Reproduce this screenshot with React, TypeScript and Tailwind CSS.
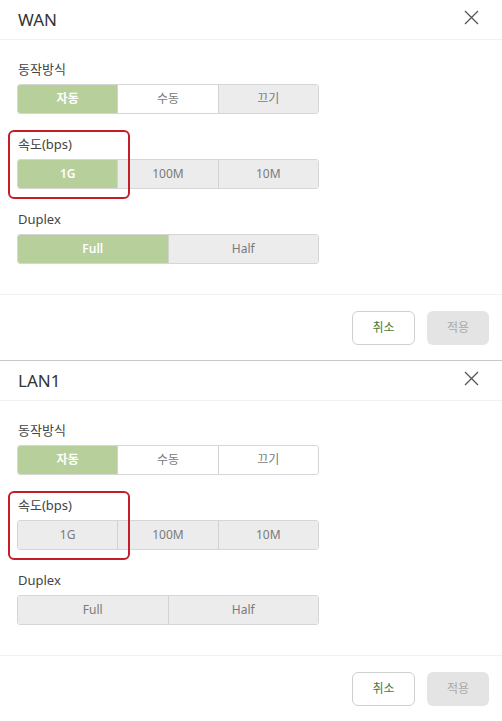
import React from "react";

type Seg = { label: string; state: "on" | "white" | "gray" };

function Group({ segs }: { segs: Seg[] }) {
  return (
    <div className="flex w-[302px] h-[30px] rounded-[3px] border border-[#d6d6d6] overflow-hidden">
      {segs.map((s, i) => (
        <div
          key={i}
          className={
            "flex-1 flex items-center justify-center text-[12px] " +
            (i > 0 ? "border-l border-[#d2d2d2] " : "") +
            (s.state === "on"
              ? "bg-[#b7cf9b] text-white font-semibold"
              : s.state === "white"
              ? "bg-white text-[#7a7a7a]"
              : "bg-[#ececec] text-[#7a7a7a]")
          }
        >
          {s.label}
        </div>
      ))}
    </div>
  );
}

function Label({ children }: { children: React.ReactNode }) {
  return <div className="h-[20px] leading-[20px] text-[13px] text-[#444] pl-px mb-[5px]">{children}</div>;
}

function Panel({
  title,
  mode,
  speed,
  duplex,
}: {
  title: string;
  mode: Seg[];
  speed: Seg[];
  duplex: Seg[];
}) {
  return (
    <div className="h-[361px] flex flex-col bg-white border-b border-[#c9c9c9]">
      <div className="h-[40px] flex items-center justify-between pl-[18px] pr-[23px] border-b border-[#f1f1f1] shrink-0">
        <span className="text-[17px] text-[#333]">{title}</span>
        <svg width="15" height="15" viewBox="0 0 15 15" className="mt-[-4px]">
          <path d="M1 1 L14 14 M14 1 L1 14" stroke="#555" strokeWidth="1.3" fill="none" />
        </svg>
      </div>
      <div className="pt-[19px] pl-[17px] pb-[30px] border-b border-[#f1f1f1]">
        <Label>동작방식</Label>
        <Group segs={mode} />
        <div className="relative mt-[20px]">
          <div className="absolute top-[-4px] left-[-9px] w-[122px] h-[69px] border-2 border-[#c41e2a] rounded-[6px] pointer-events-none" />
          <Label>속도(bps)</Label>
          <Group segs={speed} />
        </div>
        <div className="mt-[20px]">
          <Label>Duplex</Label>
          <Group segs={duplex} />
        </div>
      </div>
      <div className="flex justify-end gap-[12px] pt-[16px] pr-[13px]">
        <div className="w-[63px] h-[34px] rounded-[6px] border border-[#cfcfcf] bg-white flex items-center justify-center text-[12px] text-[#4b7a3c]">
          취소
        </div>
        <div className="w-[62px] h-[34px] rounded-[6px] bg-[#e4e4e4] flex items-center justify-center text-[12px] text-[#aaa]">
          적용
        </div>
      </div>
    </div>
  );
}

export default function App() {
  return (
    <div
      className="w-[502px] h-[721px] overflow-hidden bg-white"
      style={{ fontFamily: '"Noto Sans", "Noto Sans CJK KR", sans-serif' }}
    >
      <Panel
        title="WAN"
        mode={[
          { label: "자동", state: "on" },
          { label: "수동", state: "white" },
          { label: "끄기", state: "gray" },
        ]}
        speed={[
          { label: "1G", state: "on" },
          { label: "100M", state: "gray" },
          { label: "10M", state: "gray" },
        ]}
        duplex={[
          { label: "Full", state: "on" },
          { label: "Half", state: "gray" },
        ]}
      />
      <Panel
        title="LAN1"
        mode={[
          { label: "자동", state: "on" },
          { label: "수동", state: "white" },
          { label: "끄기", state: "white" },
        ]}
        speed={[
          { label: "1G", state: "gray" },
          { label: "100M", state: "gray" },
          { label: "10M", state: "gray" },
        ]}
        duplex={[
          { label: "Full", state: "gray" },
          { label: "Half", state: "gray" },
        ]}
      />
    </div>
  );
}
